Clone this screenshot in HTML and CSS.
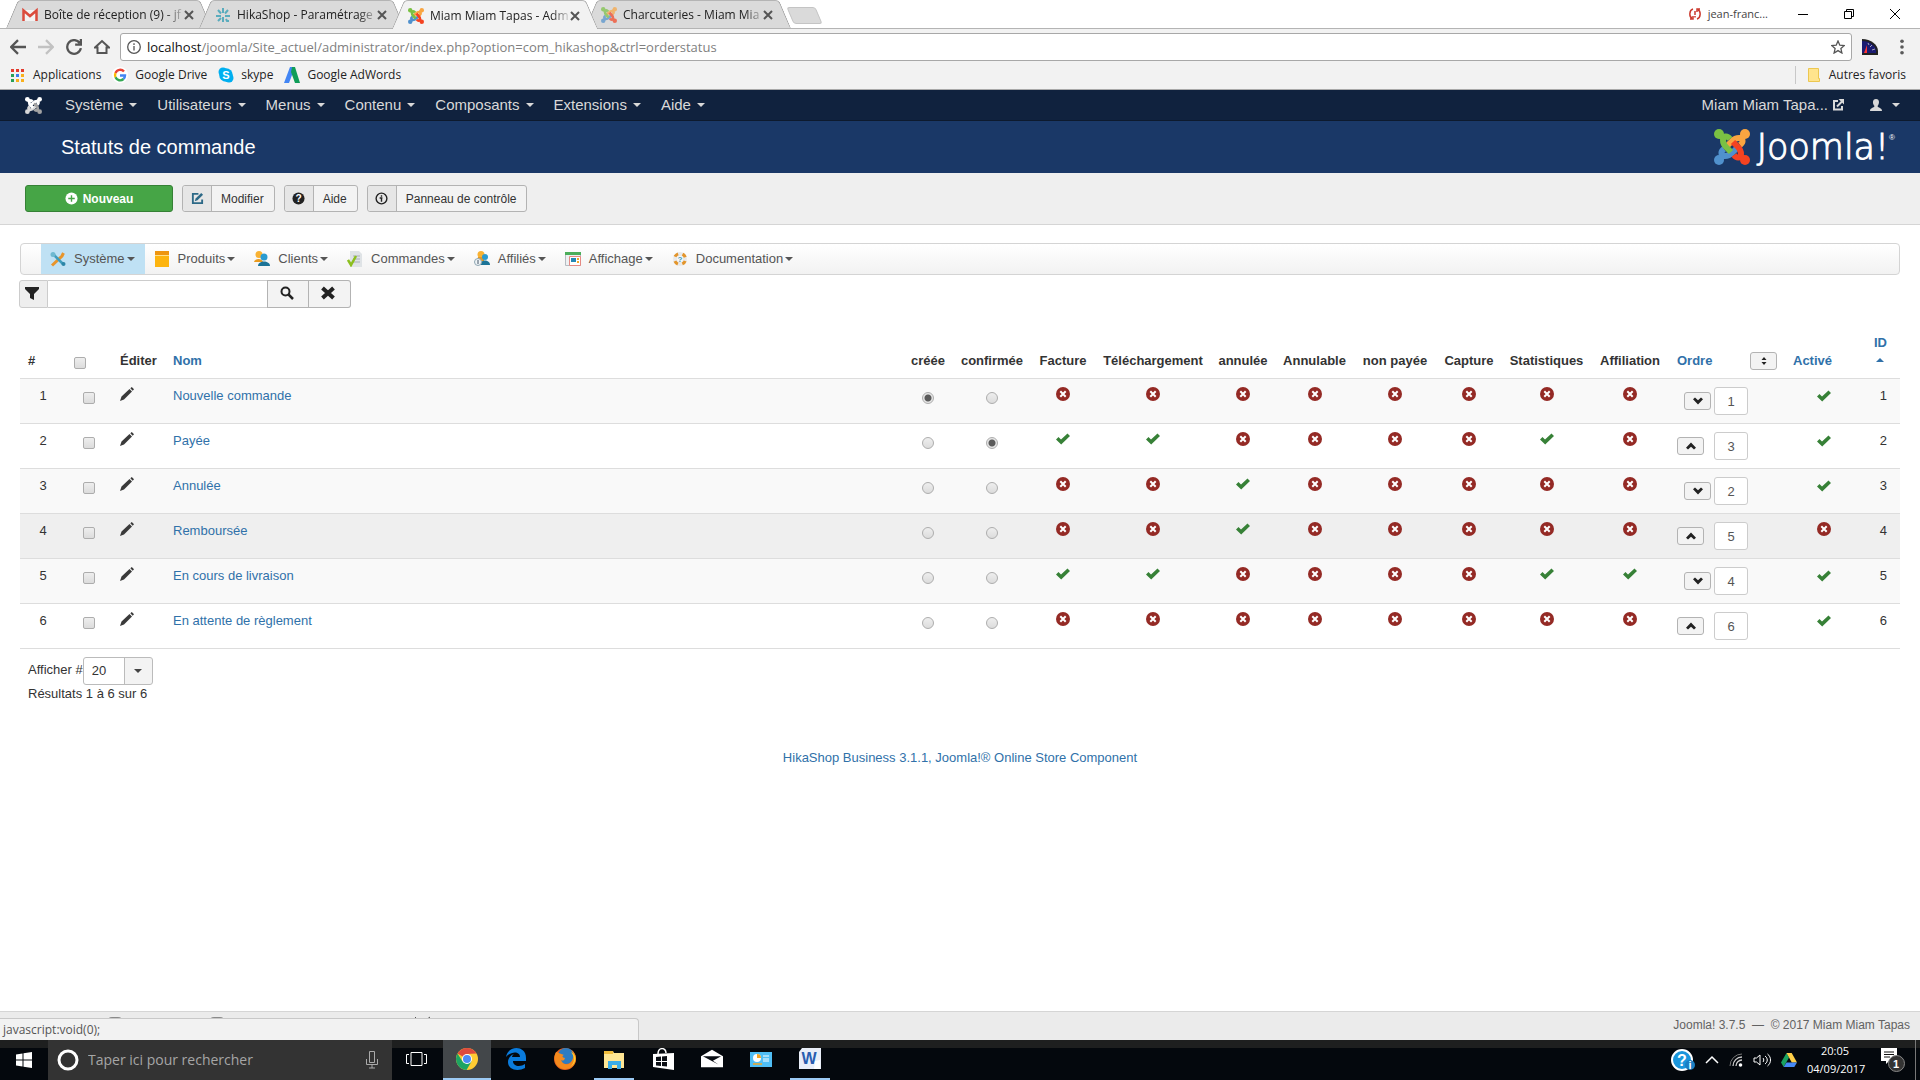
FILE: index.html
```html
<!DOCTYPE html>
<html lang="fr">
<head>
    <meta charset="UTF-8">
    <meta name="viewport" content="width=device-width, initial-scale=1.0">
    <title>Miam Miam Tapas - Administration</title>
    <link rel="stylesheet" href="styles.css">
</head>
<body>
<svg class="defs" aria-hidden="true">
    <symbol id="arm" viewBox="0 0 36 36"><circle cx="5" cy="5" r="5" fill="currentColor"/><path d="M5 5l4 4M16 10C13 6 9 7 9 11C9 14 10 16 12 18L17 23" fill="none" stroke="currentColor" stroke-width="6"/></symbol>
    <symbol id="joomla" viewBox="0 0 36 36">
        <use href="#arm" width="36" height="36" class="j-blue" transform="rotate(270 18 18)"/>
        <use href="#arm" width="36" height="36" class="j-orange" transform="rotate(90 18 18)"/>
        <use href="#arm" width="36" height="36" class="j-green"/>
        <use href="#arm" width="36" height="36" class="j-red" transform="rotate(180 18 18)"/>
    </symbol>
    <symbol id="cross" viewBox="0 0 10 10"><path d="M1 1l8 8M9 1l-8 8" stroke="currentColor" stroke-width="2" fill="none"/></symbol>
    <symbol id="no" viewBox="0 0 14 14"><circle cx="7" cy="7" r="7" fill="#942a25"/><path d="M4.3 4.3l5.4 5.4M9.7 4.3l-5.4 5.4" stroke="#fff" stroke-width="2"/></symbol>
    <symbol id="yes" viewBox="0 0 14 14"><path d="M0 7.500L2.500 5 5 7.500 11.500 1.500 14 4 5.200 12.500z" fill="#378137"/></symbol>
    <symbol id="pencil" viewBox="0 0 14 14"><path d="M0 14l1.500-4.500L9.500 2l2.500 2.500L4 12.500zM10.300 1.300L11.800 0 14 2.200l-1.300 1.500z" fill="#3a3a3a"/></symbol>
    <symbol id="down" viewBox="0 0 10 8"><path d="M0 2.200L2 .5l3 2.700L8 .5l2 1.700L5 7.500z" fill="#222"/></symbol>
    <symbol id="up" viewBox="0 0 10 8"><path d="M0 5.800L2 7.500l3-2.700 3 2.700 2-1.700L5 .5z" fill="#222"/></symbol>
</svg>

<header class="browser">
    <div class="tabstrip">
        <div class="tab">
            <svg class="fav" viewBox="0 0 16 16"><path d="M1 3h14v11H1z" fill="#f3f3f3"/><path d="M1.500 14V3.500L8 9l6.500-5.500V14" fill="none" stroke="#db4b3c" stroke-width="2.500"/></svg>
            <span>Boîte de réception (9) - jf</span>
            <button aria-label="Fermer"><svg><use href="#cross"/></svg></button>
        </div>
        <div class="tab">
            <svg class="fav" viewBox="0 0 16 16"><path d="M8 1v5M8 10v5M3 3l3 3.500M13 3l-3 3.500M1 9h5M10 9h5M3 14l3-3M11 12l1 2h2" stroke="#5aacbd" stroke-width="2" fill="none"/></svg>
            <span>HikaShop - Paramétrage</span>
            <button aria-label="Fermer"><svg><use href="#cross"/></svg></button>
        </div>
        <div class="tab active">
            <svg class="fav"><use href="#joomla"/></svg>
            <span>Miam Miam Tapas - Adm</span>
            <button aria-label="Fermer"><svg><use href="#cross"/></svg></button>
        </div>
        <div class="tab">
            <svg class="fav faded"><use href="#joomla"/></svg>
            <span>Charcuteries - Miam Mia</span>
            <button aria-label="Fermer"><svg><use href="#cross"/></svg></button>
        </div>
        <button class="newtab" aria-label="Nouvel onglet"></button>
        <div class="window">
            <svg class="sync" viewBox="0 0 12 12"><path d="M4 1C0 2 0 9 3 10M1 11h3V8M8 11C12 10 12 3 9 2M11 1H8v3M6 3v4M6 8v1.500" stroke="#cb3a2e" stroke-width="1.500" fill="none"/></svg>
            <span class="profile">jean-franc...</span>
            <button aria-label="Réduire"><svg viewBox="0 0 10 10"><path d="M0 5.500h10"/></svg></button>
            <button aria-label="Restaurer"><svg viewBox="0 0 10 10"><path d="M.5 2.500h7v7h-7zM2.500 2.500v-2h7v7h-2"/></svg></button>
            <button aria-label="Fermer la fenêtre"><svg viewBox="0 0 10 10"><path d="M0 0l10 10M10 0L0 10"/></svg></button>
        </div>
    </div>
    <div class="toolbar">
        <button aria-label="Précédent"><svg viewBox="0 0 14 14"><path d="M14 7H1M7 1L1 7l6 6"/></svg></button>
        <button aria-label="Suivant" class="off"><svg viewBox="0 0 14 14"><path d="M0 7h13M7 1l6 6-6 6"/></svg></button>
        <button aria-label="Actualiser"><svg viewBox="0 0 14 14"><path d="M12 3.500A6 6 0 1 0 13 8M13 0v5H8"/></svg></button>
        <button aria-label="Accueil"><svg viewBox="0 0 16 14"><path d="M1 7.500L8 1l7 6.500h-2.500V13h-9V7.500z"/></svg></button>
        <div class="omnibox">
            <svg viewBox="0 0 14 14"><circle cx="7" cy="7" r="6.300"/><path d="M7 6v4.500M7 3.300V5"/></svg>
            <p class="url"><b>localhost</b>/joomla/Site_actuel/administrator/index.php?option=com_hikashop&amp;ctrl=orderstatus</p>
            <svg viewBox="0 0 14 14"><path d="M7 1l1.800 4.200 4.500.4-3.400 3 1 4.400L7 10.600 3.100 13l1-4.400-3.400-3 4.500-.4z"/></svg>
        </div>
        <svg class="gauge" viewBox="0 0 16 16"><path d="M0 0C9 0 16 6 16 12v4H0z" fill="#222"/><path d="M0 2C8 2 14 7 14 12v2H0z" fill="#1b1c72"/><path d="M6 4l1 2M10 6L8 8M13 10l-3 1" stroke="#aab" stroke-width="1"/><path d="M2 14L5 6l0 8z" fill="#f33"/></svg>
        <button aria-label="Menu"><svg viewBox="0 0 14 14"><g fill="#5a5a5a" stroke="none"><circle cx="7" cy="2" r="1.600"/><circle cx="7" cy="7" r="1.600"/><circle cx="7" cy="12" r="1.600"/></g></svg></button>
    </div>
    <div class="bookmarks">
        <a href="#"><svg viewBox="0 0 16 16"><g fill="#e33b2e"><path d="M1 2h3v3H1zM6 2h3v3H6zM11 2h3v3h-3z"/></g><path d="M1 7h3v3H1zM1 12h3v3H1z" fill="#28a058"/><path d="M6 7h3v3H6z" fill="#3b7ded"/><path d="M11 7h3v3h-3zM6 12h3v3H6zM11 12h3v3h-3z" fill="#f9b01c"/></svg>Applications</a>
        <a href="#"><svg viewBox="0 0 16 16"><circle cx="8" cy="8" r="8" fill="#fff"/><g fill="none" stroke-width="2.400"><path d="M12 4.500A5 5 0 0 0 3.500 6" stroke="#ea4335"/><path d="M3.500 6A5 5 0 0 0 3.500 10.300" stroke="#fbbc05"/><path d="M3.500 10.300A5 5 0 0 0 11.500 12" stroke="#34a853"/><path d="M11.500 12A5 5 0 0 0 13 8.500H8" stroke="#4285f4"/></g></svg>Google Drive</a>
        <a href="#"><svg viewBox="0 0 16 16"><circle cx="8" cy="8" r="6.800" fill="#00aff0"/><circle cx="5" cy="5" r="4.500" fill="#00aff0"/><circle cx="11" cy="11" r="4.500" fill="#00aff0"/><text x="8" y="12" class="glyph">S</text></svg>skype</a>
        <a href="#"><svg viewBox="0 0 16 16"><path d="M6 0h5L5 16H0z" fill="#4285f4"/><path d="M8 0h3l5 16h-5L7 5z" fill="#0f9d58"/></svg>Google AdWords</a>
        <a href="#" class="others"><svg viewBox="0 0 16 16"><path d="M2.500 1.500h10v10h1v3h-11z" fill="#ffe48d" stroke="#ecc750"/></svg>Autres favoris</a>
    </div>
</header>

<nav class="navbar">
    <a href="#" class="brand" aria-label="Joomla"><svg><use href="#joomla"/></svg></a>
    <a href="#" class="caret">Système</a>
    <a href="#" class="caret">Utilisateurs</a>
    <a href="#" class="caret">Menus</a>
    <a href="#" class="caret">Contenu</a>
    <a href="#" class="caret">Composants</a>
    <a href="#" class="caret">Extensions</a>
    <a href="#" class="caret">Aide</a>
    <a href="#" class="site">Miam Miam Tapa... <svg viewBox="0 0 12 12"><path d="M6 2H2v8.500h8V7M5 7.500l5-5" stroke="#d9d9d9" stroke-width="2" fill="none"/><path d="M6.500 0H12v5.500z" fill="#d9d9d9"/></svg></a>
    <a href="#" class="caret user" aria-label="Utilisateur"><svg viewBox="0 0 12 12"><path d="M6 0c4 0 3.500 5 1.500 7C8 9 12 8.500 12 12H0C0 8.500 4 9 4.500 7 2.500 5 2 0 6 0z" fill="#d9d9d9"/></svg></a>
</nav>

<div class="title-bar">
    <h1>Statuts de commande</h1>
    <div class="logo"><svg><use href="#joomla"/></svg><span>Joomla!</span><sup>®</sup></div>
</div>

<div class="subhead">
    <button class="btn btn-new"><svg viewBox="0 0 14 14"><circle cx="7" cy="7" r="6.500" fill="#fff"/><path d="M7 3.500v7M3.500 7h7" stroke="#46a546" stroke-width="1.500"/></svg>Nouveau</button>
    <button class="btn"><i><svg viewBox="0 0 14 14"><path d="M8 2H2v10h10V8" fill="none" stroke="#2d6987" stroke-width="2"/><path d="M4 10l1-3 6-6 2 2-6 6z" fill="#2d6987"/></svg></i>Modifier</button>
    <button class="btn"><i><svg viewBox="0 0 14 14"><circle cx="7" cy="7" r="6.500" fill="#222"/><text x="7" y="11" class="glyph">?</text></svg></i>Aide</button>
    <button class="btn"><i><svg viewBox="0 0 14 14"><circle cx="7" cy="7" r="5.800" fill="none" stroke="#222" stroke-width="1.500"/><path d="M7 6v4.500M5 6.500h3M7 3.500V5" stroke="#222" stroke-width="1.500"/></svg></i>Panneau de contrôle</button>
</div>

<main>
    <nav class="hika">
        <a href="#" class="caret current"><svg viewBox="0 0 16 16"><path d="M2 14.500L12 5l1.500-3" stroke="#e8952b" stroke-width="3" fill="none"/><path d="M3 3l10 10" stroke="#3f9dbd" stroke-width="2.500"/><circle cx="3" cy="3.500" r="2.500" fill="#6fb9d0"/><circle cx="13.500" cy="13" r="2" fill="#2c86a8"/></svg>Système</a>
        <a href="#" class="caret"><svg viewBox="0 0 16 16"><path d="M1 4h14v12H1z" fill="#fdb40f"/><path d="M1 0h14v4H1z" fill="#ee9510"/><path d="M1 4.500h14" stroke="#ffe08a"/></svg>Produits</a>
        <a href="#" class="caret"><svg viewBox="0 0 16 16"><circle cx="5" cy="3.500" r="3.500" fill="#f9b233"/><path d="M0 11C1 7 8 7 9 11z" fill="#e99a1e"/><circle cx="10" cy="6" r="3.500" fill="#2b9bd0"/><path d="M4 15c0-6 12-6 12 0z" fill="#1c7497"/></svg>Clients</a>
        <a href="#" class="caret"><svg viewBox="0 0 16 16"><path d="M3 0h9l3 3v13H3z" fill="#dfe3e6"/><path d="M6 5h7M6 8h7M6 11h7" stroke="#a9afb4"/><path d="M1 9l3 5L9 5" stroke="#8cbf1f" stroke-width="2.500" fill="none"/></svg>Commandes</a>
        <a href="#" class="caret"><svg viewBox="0 0 16 16"><circle cx="7" cy="3.500" r="3.500" fill="#f9b233"/><path d="M3 10h7V6H4z" fill="#e99a1e"/><circle cx="11" cy="6" r="3" fill="#2b9bd0"/><path d="M6 14c0-6 10-6 10 0z" fill="#1c7497"/><circle cx="4" cy="11" r="3.500" fill="#eef3f6" stroke="#8fa6b2"/><path d="M4 9v4" stroke="#456"/></svg>Affiliés</a>
        <a href="#" class="caret"><svg viewBox="0 0 16 16"><path d="M.5 1.500h15v13H.5z" fill="#eef0f2" stroke="#b5bcc2"/><path d="M0 1h16v3H0z" fill="#4cae5b"/><path d="M4.500 5.500h11v9h-11z" fill="#fff" stroke="#e58983"/><path d="M6 7h5v4H6z" fill="#2488b5"/><path d="M12 7h2v2h-2zM12 10h2v2h-2z" fill="#f0a62a"/></svg>Affichage</a>
        <a href="#" class="caret"><svg viewBox="0 0 16 16"><circle cx="8" cy="8" r="5" fill="none" stroke="#e9e9e9" stroke-width="4"/><circle cx="8" cy="8" r="5.500" fill="none" stroke="#e3952b" stroke-width="3" stroke-dasharray="4 4.640" stroke-dashoffset="-2"/><text x="8" y="11" class="glyph small">?</text></svg>Documentation</a>
    </nav>

    <form class="filter">
        <label for="search"><svg viewBox="0 0 14 14"><path d="M0 1h14v2L9 8v6l-4-2V8L0 3z" fill="#222"/></svg></label>
        <input type="text" id="search" aria-label="Filtrer">
        <button type="button" aria-label="Rechercher"><svg viewBox="0 0 14 14"><circle cx="5.500" cy="5.500" r="4" fill="none" stroke="#222" stroke-width="2"/><path d="M8.500 8.500l4.500 4.500" stroke="#222" stroke-width="2.500"/></svg></button>
        <button type="button" aria-label="Effacer"><svg viewBox="0 0 14 14"><path d="M1.500 2l11 10M12.500 2l-11 10" stroke="#222" stroke-width="4"/></svg></button>
    </form>

    <table>
        <colgroup>
            <col class="w46"><col class="w46"><col class="w53"><col>
            <col class="w50"><col class="w78"><col class="w64"><col class="w116">
            <col class="w64"><col class="w79"><col class="w82"><col class="w66">
            <col class="w89"><col class="w78"><col class="w116"><col class="w60"><col class="w55">
        </colgroup>
        <thead>
            <tr>
                <th>#</th>
                <th><input type="checkbox" aria-label="Tout cocher"></th>
                <th>Éditer</th>
                <th><a href="#">Nom</a></th>
                <th class="c">créée</th>
                <th class="c">confirmée</th>
                <th class="c">Facture</th>
                <th class="c">Téléchargement</th>
                <th class="c">annulée</th>
                <th class="c">Annulable</th>
                <th class="c">non payée</th>
                <th class="c">Capture</th>
                <th class="c">Statistiques</th>
                <th class="c">Affiliation</th>
                <th><div class="order-head"><a href="#">Ordre</a><button class="mini" aria-label="Enregistrer l'ordre"><svg viewBox="0 0 10 8"><path d="M2.500 3L5 0l2.500 3zM2.500 5L5 8l2.500-3z" fill="#222"/></svg></button></div></th>
                <th><a href="#">Activé</a></th>
                <th class="id"><a href="#">ID<span class="asc"></span></a></th>
            </tr>
        </thead>
        <tbody id="rows"></tbody>
    </table>

    <div class="pager">
        <div class="limit">
            <label for="limit">Afficher #</label>
            <span class="select"><select id="limit"><option>20</option><option>50</option></select></span>
        </div>
        <p>Résultats 1 à 6 sur 6</p>
    </div>
    <p class="credit"><a href="#">HikaShop Business 3.1.1, Joomla!® Online Store Component</a></p>
</main>

<footer class="status">
    <svg class="peek" viewBox="0 0 440 14"><g fill="#8a8a8a"><rect x="107" y="6" width="16" height="8" rx="5"/><rect x="209" y="6" width="16" height="8" rx="5"/></g><path d="M415 6l3 3M430 6l-4 3" stroke="#555"/></svg>
    <span>Joomla! 3.7.5 &nbsp;—&nbsp; © 2017 Miam Miam Tapas</span>
    <div class="bubble">javascript:void(0);</div>
</footer>

<div class="taskbar">
    <button class="start" aria-label="Démarrer"><svg viewBox="0 0 16 16"><path d="M0 2.500L6.500 1.500v6H0zM7.500 1.300L16 0v7.500H7.500zM0 8.500h6.500v6L0 13.500zM7.500 8.500H16V16l-8.500-1.200z" fill="#fff"/></svg></button>
    <div class="cortana">
        <svg class="ring" viewBox="0 0 22 22"><circle cx="11" cy="11" r="9" fill="none" stroke="#fff" stroke-width="3"/></svg>
        <input type="text" placeholder="Taper ici pour rechercher" aria-label="Rechercher">
        <svg class="mic" viewBox="0 0 12 18"><path d="M3.500.5h5v11h-5zM.5 8v5.500h11V8M6 14v3M3 17h6" stroke="#aaa" fill="none"/></svg>
    </div>
    <button class="task view" aria-label="Vue des tâches"><svg viewBox="0 0 22 22"><path d="M6 4.500h11v13H6zM4 6.500H1.500v9H4M19 6.500h2.500v9H19" stroke="#fff" fill="none"/></svg></button>
    <button class="task open front" aria-label="Chrome"><svg viewBox="0 0 22 22"><circle cx="11" cy="11" r="11" fill="#fc3"/><path d="M11 11L1.500 5.500A11 11 0 0 1 20.500 5.500L11 6z" fill="#dd4b3e"/><path d="M1.500 5.500A11 11 0 0 0 10.500 22l5-8.500L11 11 6.500 13.500z" fill="#1da462"/><circle cx="11" cy="11" r="5" fill="#fff"/><circle cx="11" cy="11" r="4" fill="#4c8bf5"/></svg></button>
    <button class="task" aria-label="Edge"><svg viewBox="0 0 22 22"><path d="M1 9C3-3 21-3 21 10v3H8c0 6 8 6 12 3v4C13 24 3 22 3 14c0-4 3-7 6-8C7 7 7 9 7 9h8c0-6-9-6-14 0z" fill="#0a7bdc"/></svg></button>
    <button class="task" aria-label="Firefox"><svg viewBox="0 0 22 22"><circle cx="11" cy="11" r="11" fill="#e8601c"/><circle cx="12" cy="8" r="8" fill="#2d7cc0"/><path d="M2 4c2 0 4 2 8 3-3 1-1 3 1 3-1 4-4 2-4 2 2 6 10 6 12-2 1-4-1-7-2-8 4 2 5 6 5 9-1 13-19 13-21 2-1-4 0-7 1-9z" fill="#f48a1d"/><path d="M17 4c5 6 3 12-1 15 7-4 7-12 1-15z" fill="#fed12f"/></svg></button>
    <button class="task open" aria-label="Explorateur"><svg viewBox="0 0 22 22"><path d="M1 3h9l1 2h10v15H1z" fill="#ffe694"/><path d="M1 3h9v3H1z" fill="#f1bd3c"/><path d="M5 21v-8h13v8h-4v-4H9v4z" fill="#3bade8"/></svg></button>
    <button class="task" aria-label="Store"><svg viewBox="0 0 22 22"><path d="M1 6l21-1v17L1 19z" fill="#fff"/><path d="M6 6c0-7 8-7 8-1" fill="none" stroke="#fff" stroke-width="1.500"/><path d="M4 9l5-.5V13H4zM10 8.400l5-.4v5h-5zM4 14h5v4l-5-.5zM10 14h5v4.500l-5-.4z" fill="#0a0e14"/></svg></button>
    <button class="task" aria-label="Courrier"><svg viewBox="0 0 24 22"><path d="M0 8l12-7 12 7v12H0z" fill="#fff"/><path d="M2 8h20l-9 5 6 4z" fill="#0a0e14"/></svg></button>
    <button class="task" aria-label="Panneau"><svg viewBox="0 0 22 22"><path d="M0 4h22v15H0z" fill="#50bef5"/><circle cx="7" cy="10" r="4" fill="#fff"/><path d="M7 10V6a4 4 0 0 1 4 4z" fill="#f5a623"/><path d="M13 8h6M13 11h6M13 13h6" stroke="#fff"/><path d="M3 16h9" stroke="#f5a623" stroke-width="1.500"/></svg></button>
    <button class="task open" aria-label="Word"><svg viewBox="0 0 22 22"><path d="M3 0h19v21H0V4z" fill="#e9eef8"/><text x="10" y="16" class="glyph word">W</text><path d="M16 13l5-1v9h-6z" fill="#fff"/></svg></button>
    <div class="tray">
        <svg class="help" viewBox="0 0 24 22"><circle cx="11" cy="11" r="10" fill="#1b96dc" stroke="#fff" stroke-width="2"/><text x="11" y="17" class="glyph big">?</text><circle cx="19" cy="16" r="5" fill="#1b7fc4"/><text x="19" y="20" class="glyph">i</text></svg>
        <svg viewBox="0 0 14 14"><path d="M1 10l6-6 6 6" stroke="#fff" stroke-width="1.500" fill="none"/></svg>
        <svg viewBox="0 0 14 14"><path d="M1 13A12 12 0 0 1 13 1" stroke="#777" fill="none"/><path d="M4 13a9 9 0 0 1 9-9M7 13a6 6 0 0 1 6-6" stroke="#ccc" stroke-width="1.300" fill="none"/><circle cx="11.500" cy="12" r="1.800" fill="#fff"/></svg>
        <svg class="volume" viewBox="0 0 18 14"><path d="M1 5h2.500L7 2v10L3.500 9H1zM10 5c1 1 1 3 0 4M12 3c3 2 3 6 0 8M14.500 1c4 3 4 9 0 12" stroke="#fff" fill="none"/></svg>
        <svg class="drive" viewBox="0 0 16 14"><path d="M5.500 0L0 9.500 2.700 14 8 4.500z" fill="#1aa260"/><path d="M5.500 0h5.200L16 9.500h-5.200z" fill="#ffcf48"/><path d="M5.500 9.500H16L13.300 14H2.700z" fill="#4688f4"/></svg>
        <div class="clock"><span>20:05</span><span>04/09/2017</span></div>
        <svg class="notif" viewBox="0 0 24 24"><path d="M0 0h16v13H8l-3 3v-3H0z" fill="#fff"/><path d="M3 4h10M3 6.500h10M3 9h6" stroke="#111"/><circle cx="15.500" cy="15.500" r="8" fill="#333" stroke="#888"/><text x="15" y="20" class="glyph">1</text></svg>
        <span class="desktop"></span>
    </div>
</div>

<script>
    // flags: one digit per column, from Facture to Affiliation
    var statuses = [
        { name: "Nouvelle commande", created: 1, flags: "00000000", order: 1, on: 1 },
        { name: "Payée", confirmed: 1, flags: "11000010", order: 3, on: 1 },
        { name: "Annulée", flags: "00100000", order: 2, on: 1 },
        { name: "Remboursée", flags: "00100000", order: 5, on: 0 },
        { name: "En cours de livraison", flags: "11000011", order: 4, on: 1 },
        { name: "En attente de règlement", flags: "00000000", order: 6, on: 1 }
    ];

    function icon(v) {
        return '<svg class="flag"><use href="#' + (v == 1 ? "yes" : "no") + '"/></svg>';
    }

    function radio(group, on, name) {
        return '<td class="c"><input type="radio" name="' + group + '" aria-label="' + name + '"' + (on ? " checked" : "") + '></td>';
    }

    var html = "";
    statuses.forEach(function (s, i) {
        var dir = i % 2 ? "up" : "down";
        html += '<tr' + (i == 3 ? ' class="hover"' : '') + '>';
        html += '<td class="c">' + (i + 1) + '</td>';
        html += '<td class="c"><input type="checkbox" aria-label="' + s.name + '"></td>';
        html += '<td><svg class="flag"><use href="#pencil"/></svg></td>';
        html += '<td><a href="#">' + s.name + '</a></td>';
        html += radio("created", s.created, s.name) + radio("confirmed", s.confirmed, s.name);
        s.flags.split("").forEach(function (f) {
            html += '<td class="c">' + icon(f) + '</td>';
        });
        html += '<td><div class="order ' + dir + '"><button class="mini" aria-label="Déplacer"><svg><use href="#' + dir + '"/></svg></button>';
        html += '<input type="text" aria-label="Ordre" value="' + s.order + '"></div></td>';
        html += '<td class="pub' + (s.on ? ' on' : '') + '">' + icon(s.on) + '</td>';
        html += '<td class="id">' + (i + 1) + '</td></tr>';
    });
    document.getElementById("rows").innerHTML = html;
</script>
</body>
</html>
```

FILE: styles.css
```css
* {
    box-sizing: border-box;
    margin: 0;
    padding: 0;
}
body {
    display: flex;
    flex-direction: column;
    min-height: 100vh;
    background: #fff;
    color: #333;
    font: 13px/18px "Liberation Sans", Arial, sans-serif;
}
a {
    color: #3071a9;
    text-decoration: none;
}
button, input, select {
    font: inherit;
    color: inherit;
}
button {
    border: 0;
    background: none;
}
svg {
    flex: none;
}
.defs {
    position: absolute;
    width: 0;
    height: 0;
}
.glyph {
    fill: #fff;
    font: bold 11px "Liberation Sans", Arial, sans-serif;
    text-anchor: middle;
}
.glyph.small {
    fill: #3b9bc0;
    font-size: 8px;
}
.glyph.big {
    font-size: 16px;
}
.glyph.word {
    fill: #2a5db0;
    font-size: 16px;
}
.j-green { color: #7ac143; }
.j-orange { color: #f9a541; }
.j-red { color: #f44321; }
.j-blue { color: #5091cd; }

/* browser */
.browser {
    border-bottom: 1px solid #a9a9a9;
    background: #f2f2f2;
    color: #222;
    font: 12px/18px "Open Sans", "Noto Sans", sans-serif;
}
.tabstrip {
    display: flex;
    height: 29px;
    padding-left: 12px;
    background: #fff;
    border-bottom: 1px solid #b4b4b4;
}
.tab {
    position: relative;
    z-index: 0;
    display: flex;
    align-items: center;
    width: 193px;
    height: 28px;
    padding: 2px 11px 0 10px;
}
.tab::before, .tab::after {
    content: "";
    position: absolute;
    z-index: -1;
    top: 0;
    bottom: 0;
    background: #dadada;
    border-top: 1px solid #b4b4b4;
}
.tab::before {
    left: 0;
    right: 40%;
    border-left: 1px solid #a0a0a0;
    border-radius: 4px 0 0 0;
    transform: skewX(-23deg);
}
.tab::after {
    left: 40%;
    right: -1px;
    border-right: 1px solid #a0a0a0;
    border-radius: 0 4px 0 0;
    transform: skewX(23deg);
}
.tab.active {
    z-index: 1;
    height: 29px;
}
.tab.active::before, .tab.active::after {
    background: #f2f2f2;
}
.tab .fav {
    width: 16px;
    height: 16px;
    margin-right: 6px;
}
.faded {
    opacity: .7;
}
.tab span {
    flex: 1;
    min-width: 0;
    white-space: nowrap;
    mask-image: linear-gradient(to right, #000 88%, rgba(0, 0, 0, .2));
}
.tab button {
    width: 10px;
    height: 10px;
    margin-left: 2px;
    color: #555;
    line-height: 0;
}
.tab button svg {
    width: 10px;
    height: 10px;
}
.newtab {
    width: 29px;
    height: 17px;
    margin: 7px 0 0 6px;
    border: 1px solid #c4c4c4;
    border-radius: 3px;
    background: #dadada;
    transform: skewX(23deg);
}
.window {
    display: flex;
    align-items: center;
    margin-left: auto;
    padding-right: 2px;
}
.sync {
    width: 12px;
    height: 12px;
    margin-right: 7px;
}
.profile {
    margin-right: 12px;
    color: #444;
    font-size: 11px;
}
.window button {
    width: 46px;
    height: 26px;
    line-height: 0;
}
.window button svg {
    width: 10px;
    height: 10px;
    fill: none;
    stroke: #000;
}
.toolbar {
    display: flex;
    align-items: center;
    height: 36px;
    padding: 0 10px 0 4px;
}
.toolbar button {
    width: 28px;
    height: 28px;
    line-height: 0;
}
.toolbar svg {
    width: 16px;
    height: 16px;
    fill: none;
    stroke: #555;
    stroke-width: 2;
}
.toolbar .off {
    opacity: .3;
}
.omnibox {
    display: flex;
    flex: 1;
    align-items: center;
    height: 28px;
    margin-left: 4px;
    padding: 0 6px;
    border: 1px solid #a8a8a8;
    border-radius: 3px;
    background: #fff;
}
.omnibox svg {
    width: 14px;
    height: 14px;
    stroke-width: 1.3;
}
.url {
    flex: 1;
    margin-left: 6px;
    color: #808080;
    font-size: 13px;
}
.url b {
    color: #111;
    font-weight: normal;
}
.toolbar .gauge {
    margin: 0 12px 0 10px;
    stroke: none;
}
.toolbar button:last-child {
    width: 24px;
    margin-right: -4px;
}
.bookmarks {
    display: flex;
    align-items: center;
    gap: 11px;
    height: 24px;
    padding: 0 14px 4px 10px;
}
.bookmarks a {
    display: flex;
    align-items: center;
    gap: 7px;
    color: #222;
}
.bookmarks svg {
    width: 16px;
    height: 16px;
}
.bookmarks .others {
    margin-left: auto;
    padding-left: 10px;
    border-left: 1px solid #c8c8c8;
}

/* joomla header */
.navbar {
    display: flex;
    align-items: center;
    height: 31px;
    padding: 0 10px 0 15px;
    background: #10223e;
    border-bottom: 1px solid #0d1a2e;
    font-size: 15px;
}
.navbar a {
    display: flex;
    align-items: center;
    padding: 0 10px;
    color: #d9d9d9;
}
.navbar svg {
    width: 12px;
    height: 12px;
}
.navbar .brand {
    padding-right: 13px;
    filter: grayscale(1) brightness(1.6);
}
.navbar .brand svg {
    width: 17px;
    height: 17px;
}
.navbar .site {
    gap: 4px;
    margin-left: auto;
    padding-right: 16px;
}
.caret::after {
    content: "";
    margin-left: 6px;
    border: 4px solid transparent;
    border-top-color: currentColor;
    border-bottom: 0;
}
.user::after {
    margin-left: 10px;
}
.title-bar {
    display: flex;
    align-items: center;
    justify-content: space-between;
    height: 52px;
    padding: 0 25px 0 61px;
    background: #1a3867;
    color: #fff;
}
h1 {
    font-size: 20px;
    font-weight: normal;
    line-height: 24px;
}
.logo {
    display: flex;
    align-items: center;
}
.logo svg {
    width: 36px;
    height: 36px;
    margin-right: 7px;
}
.logo span {
    font: 200 35px/36px "DejaVu Sans", sans-serif;
    -webkit-text-stroke: 1px #fff;
}
.logo sup {
    align-self: flex-start;
    font-size: 8px;
}
.subhead {
    display: flex;
    gap: 9px;
    height: 52px;
    padding: 12px 25px;
    background: #efefef;
    border-bottom: 1px solid #d5d5d5;
    font-size: 12px;
}
.btn {
    display: flex;
    align-items: center;
    height: 27px;
    padding-right: 10px;
    border: 1px solid #b3b3b3;
    border-radius: 3px;
    background: #f3f3f3;
}
.btn svg {
    width: 13px;
    height: 13px;
}
.btn i {
    display: flex;
    align-items: center;
    justify-content: center;
    width: 29px;
    height: 25px;
    margin-right: 9px;
    border-right: 1px solid #b3b3b3;
    border-radius: 3px 0 0 3px;
    background: #e6e6e6;
}
.btn-new {
    justify-content: center;
    gap: 5px;
    width: 148px;
    padding: 0;
    border-color: #368136;
    background: #46a546;
    color: #fff;
    font-weight: bold;
}

/* content */
main {
    flex: 1;
    padding: 18px 20px;
}
.hika {
    display: flex;
    height: 32px;
    padding-left: 20px;
    border: 1px solid #d4d4d4;
    border-radius: 4px;
    background: linear-gradient(#fff, #f2f2f2);
}
.hika a {
    display: flex;
    align-items: center;
    padding: 0 10px 0 9px;
    color: #555;
}
.hika svg {
    width: 16px;
    height: 16px;
    margin-right: 8px;
}
.hika .caret::after {
    margin-left: 2px;
}
.hika .current {
    background: #bfe1f4;
}
.filter {
    display: flex;
    width: 332px;
    height: 28px;
    margin: 5px 0 18px -1px;
}
.filter label, .filter button {
    display: flex;
    align-items: center;
    justify-content: center;
    width: 42px;
    padding: 0 3px 3px 0;
    border: 1px solid #b3b3b3;
    background: #f3f3f3;
}
.filter label {
    width: 29px;
    border-color: #ccc;
    border-radius: 3px 0 0 3px;
    background: #eee;
}
.filter button:last-child {
    border-left: 0;
    border-radius: 0 3px 3px 0;
}
.filter input {
    flex: 1;
    min-width: 0;
    padding: 4px 6px;
    border: 1px solid #ccc;
    border-width: 1px 0;
}
.filter svg {
    width: 14px;
    height: 14px;
}

table {
    width: 100%;
    table-layout: fixed;
    border-collapse: separate;
    border-spacing: 0;
    border-bottom: 1px solid #ddd;
}
.w46 { width: 46px; }
.w50 { width: 50px; }
.w53 { width: 53px; }
.w55 { width: 55px; }
.w60 { width: 60px; }
.w64 { width: 64px; }
.w66 { width: 66px; }
.w78 { width: 78px; }
.w79 { width: 79px; }
.w82 { width: 82px; }
.w89 { width: 89px; }
.w116 { width: 116px; }
th, td {
    padding: 8px 0 8px 8px;
    text-align: left;
    white-space: nowrap;
}
th {
    vertical-align: bottom;
}
td {
    height: 45px;
    border-top: 1px solid #ddd;
    vertical-align: top;
}
tbody tr:nth-child(odd) {
    background: #f9f9f9;
}
tbody tr.hover {
    background: #efefef;
}
th.c, td.c {
    padding-left: 0;
    text-align: center;
}
th.id, td.id {
    padding-right: 13px;
    text-align: right;
}
.asc {
    display: block;
    height: 18px;
    padding: 6px 3px 0 0;
}
.asc::before {
    content: "";
    display: block;
    width: 0;
    margin-left: auto;
    border: 4px solid transparent;
    border-top: 0;
    border-bottom-color: #3071a9;
}
input[type="checkbox"], input[type="radio"] {
    appearance: none;
    width: 12px;
    height: 12px;
    margin-top: 5px;
    border: 1px solid #adadad;
    border-radius: 2px;
    background: linear-gradient(#eee, #dcdcdc);
    vertical-align: top;
}
input[type="radio"] {
    border-radius: 50%;
}
input[type="radio"]:checked {
    background: radial-gradient(#5a5a5a 0 3px, #e6e6e6 4px);
}
.flag {
    width: 14px;
    height: 14px;
    vertical-align: top;
}
td.pub {
    padding-left: 32px;
}
td.on {
    padding-top: 10px;
}
.mini {
    display: flex;
    align-items: center;
    justify-content: center;
    width: 27px;
    height: 18px;
    border: 1px solid #b3b3b3;
    border-radius: 3px;
    background: #f3f3f3;
}
.mini svg {
    width: 10px;
    height: 8px;
}
.order-head {
    display: flex;
    justify-content: space-between;
    padding-right: 8px;
}
.order {
    display: flex;
    align-items: center;
    justify-content: space-between;
    width: 71px;
    height: 28px;
}
.order.down {
    padding-left: 7px;
}
.order input {
    width: 34px;
    height: 28px;
    border: 1px solid #ccc;
    border-radius: 3px;
    background: #fff;
    color: #555;
    text-align: center;
}
.pager {
    padding: 8px;
}
.limit {
    display: flex;
    height: 28px;
}
.limit label {
    padding-top: 4px;
}
.select {
    position: relative;
    width: 70px;
}
.select::after {
    content: "";
    position: absolute;
    top: 12px;
    right: 11px;
    border: 4px solid transparent;
    border-top-color: #444;
    border-bottom: 0;
    pointer-events: none;
}
.select select {
    appearance: none;
    width: 70px;
    height: 28px;
    padding-left: 8px;
    border: 1px solid #bbb;
    border-radius: 3px;
    background: linear-gradient(to right, #fff 40px, #bbb 40px 41px, #f3f3f3 41px);
}
.credit {
    margin-top: 38px;
    text-align: center;
}
.status {
    position: relative;
    height: 29px;
    padding: 4px 10px;
    border-top: 1px solid #d5d5d5;
    background: #ebebeb;
    color: #626262;
    font-size: 12px;
    text-align: right;
}
/* left part of the status bar, mostly under the link bubble */
.peek {
    position: absolute;
    left: 0;
    top: -1px;
    width: 440px;
    height: 14px;
}
.bubble {
    position: absolute;
    left: 0;
    bottom: 0;
    width: 639px;
    height: 22px;
    padding: 1px 3px;
    border: 1px solid #c8c8c8;
    border-width: 1px 1px 0 0;
    border-radius: 0 4px 0 0;
    background: #f2f2f2;
    color: #555;
    font: 12px/20px "Open Sans", "Noto Sans", sans-serif;
    text-align: left;
}

/* windows taskbar */
.taskbar {
    display: flex;
    height: 40px;
    background: linear-gradient(#1e1f1f 8px, #04080d 8px);
    color: #fff;
    font: 12px/18px "Open Sans", "Noto Sans", sans-serif;
}
.start {
    width: 48px;
    line-height: 0;
}
.start svg {
    width: 16px;
    height: 16px;
}
.cortana {
    display: flex;
    align-items: center;
    width: 344px;
    padding: 0 14px 0 9px;
    background: #333;
}
.ring {
    width: 22px;
    height: 22px;
    margin-right: 9px;
}
.cortana input {
    flex: 1;
    border: 0;
    background: none;
    font-size: 14px;
}
.cortana input::placeholder {
    color: #a6a6a6;
}
.mic {
    width: 12px;
    height: 18px;
}
.task {
    width: 40px;
    margin-left: 9px;
    border-bottom: 2px solid transparent;
    line-height: 0;
}
.task svg {
    width: 22px;
    height: 22px;
}
.task.view {
    margin: 0 7px 0 4px;
}
.task.open {
    border-color: #9ccaf4;
}
.task.front {
    width: 48px;
    margin: 0 -4px 0 0;
    background: #43474a;
}
.tray {
    display: flex;
    align-items: center;
    gap: 10px;
    margin-left: auto;
    padding-right: 4px;
}
.tray svg {
    width: 14px;
    height: 14px;
}
.tray .help {
    width: 24px;
    height: 22px;
}
.tray .volume {
    width: 18px;
}
.tray .drive {
    width: 16px;
}
.clock {
    display: flex;
    flex-direction: column;
    width: 56px;
    text-align: center;
    font-size: 11px;
}
.tray .notif {
    width: 24px;
    height: 24px;
    margin-left: 8px;
}
.desktop {
    width: 1px;
    height: 40px;
    background: #777;
}
```
